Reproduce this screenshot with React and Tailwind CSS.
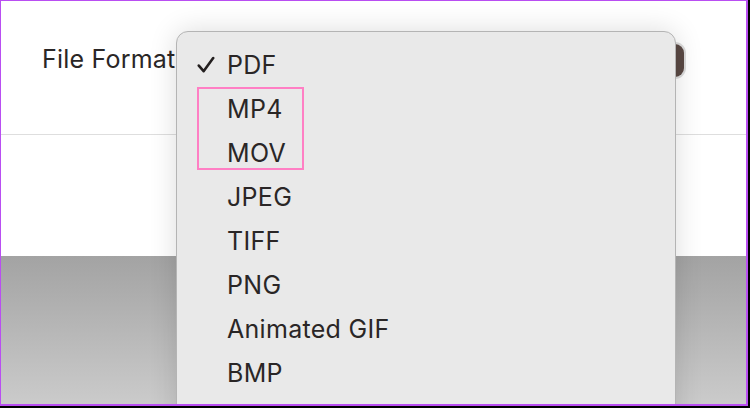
import React from "react";

const items = ["PDF", "MP4", "MOV", "JPEG", "TIFF", "PNG", "Animated GIF", "BMP"];

export default function App() {
  return (
    <div className="w-[750px] h-[408px] bg-black overflow-hidden" style={{ fontFamily: "Inter, 'Liberation Sans', sans-serif" }}>
      <div className="relative w-[748px] h-[406px] border-2 border-l border-t border-[#b94ef2] bg-white overflow-hidden flex flex-col">
        <div className="h-[133px] flex items-start pt-[41px] pl-[41px]">
          <span className="text-[25px] leading-[34px] tracking-[0.2px] text-[#2a2626]">File Format</span>
          <div className="ml-[auto] mr-[62px] mt-[2px] w-[120px] h-[33px] rounded-[9px] bg-[#5a4944] ring-2 ring-[#dcdcdc]" />
        </div>
        <div className="h-px bg-[#dedede]" />
        <div className="h-[121px] bg-white" />
        <div className="flex-1 bg-gradient-to-b from-[#a3a3a3] to-[#cbcbcb]" />

        <div className="absolute left-[175px] top-[30px] w-[500px] h-[420px] rounded-[12px] bg-[#e9e9e9] border border-[#b4b4b4] shadow-[0_0_28px_rgba(0,0,0,0.14)] pt-[11px]">
          {items.map((it, i) => (
            <div key={it} className="relative h-[44px] pl-[50px] text-[25px] leading-[44px] tracking-[0.3px] text-[#2a2626]">
              {i === 0 && (
                <svg className="absolute left-[20px] top-[13px]" width="18" height="18" viewBox="0 0 18 18">
                  <path d="M1.8 9.6 L6.6 15.2 L16.2 2" fill="none" stroke="#231f1f" strokeWidth="2.6" strokeLinecap="round" strokeLinejoin="round" />
                </svg>
              )}
              {it}
            </div>
          ))}
        </div>

        <div className="absolute left-[196px] top-[86px] w-[107px] h-[83px] border-2 border-[#ff7fc4]" />
      </div>
    </div>
  );
}
